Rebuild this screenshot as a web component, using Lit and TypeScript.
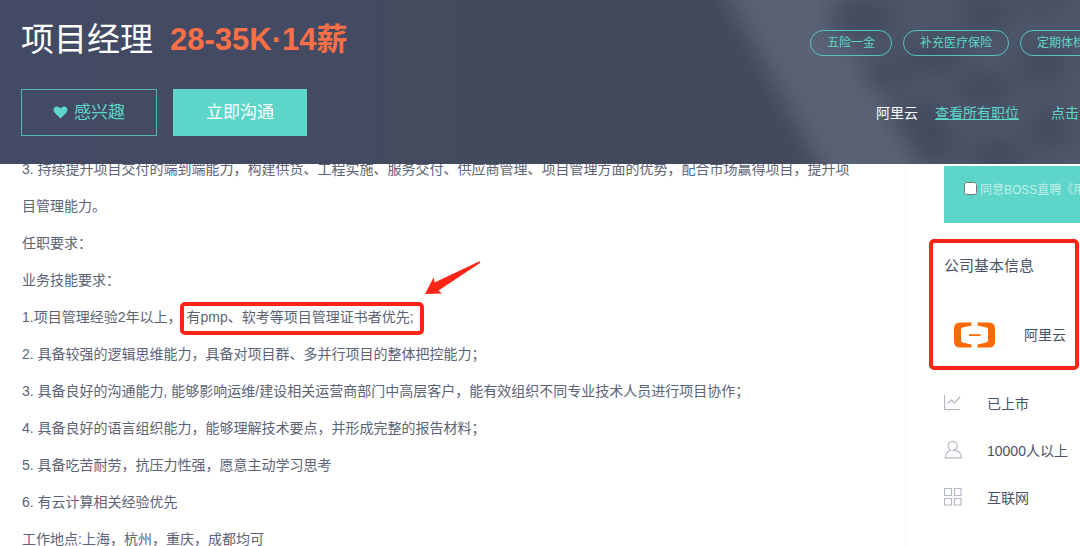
import { LitElement, html, css, svg } from "lit";
import { customElement } from "lit/decorators.js";

interface Fact { icon: unknown; text: string; }

const LINES: string[] = [
  "任职要求：",
  "业务技能要求：",
];

const MORE: string[] = [
  "2. 具备较强的逻辑思维能力，具备对项目群、多并行项目的整体把控能力；",
  "3. 具备良好的沟通能力, 能够影响运维/建设相关运营商部门中高层客户，能有效组织不同专业技术人员进行项目协作；",
  "4. 具备良好的语言组织能力，能够理解技术要点，并形成完整的报告材料；",
  "5. 具备吃苦耐劳，抗压力性强，愿意主动学习思考",
  "6. 有云计算相关经验优先",
  "工作地点:上海，杭州，重庆，成都均可",
];

const FACTS: Fact[] = [
  { icon: svg`<path d="M.5 2v14.5H16M3.500 10.500l4-3.500 3 3 5.500-6"/>`, text: "已上市" },
  { icon: svg`<path d="M7 10.200A4.600 4.600 0 1 1 12.500 8.500C11.500 9.500 10 10 9.500 10.300 14.500 10.500 17.500 13 17.500 17.800H1.300C1.300 13.500 3.500 11.500 7 10.200"/>`, text: "10000人以上" },
  { icon: svg`<path d="M.5 1.500h7v7h-7zM10.500 1.500h6.500v7h-6.500zM.5 11.500h7v6.500h-7zM10.500 11.500h6.500v6.500h-6.500z"/>`, text: "互联网" },
];

// Blurred keyboard keys behind the header: x, y, half width, half height.
const KEYS: number[][] = [
  [862, 18, 36, 17], [888, 74, 22, 15], [934, 56, 30, 18], [985, 14, 26, 18], [1042, 0, 26, 10],
  [1042, 64, 26, 18], [985, 90, 28, 18], [920, 118, 24, 18], [936, 144, 24, 18], [998, 156, 28, 18],
  [1050, 128, 24, 18],
];

@customElement("job-header")
export class JobHeader extends LitElement {
  static styles = css`
    :host { display: block; position: relative; z-index: 1; overflow: hidden; background: linear-gradient(90deg, #434a63 0, #434a62 360px, #434b5e 400px, #42495c 720px); color: #fff; }
    .backdrop { position: absolute; top: 0; left: 0; width: 1080px; height: 164px; }
    .bar { position: relative; display: flex; justify-content: space-between; padding: 15px 0 28px 21px; height: 121px; white-space: nowrap; }
    .main, .side { display: flex; flex-direction: column; justify-content: space-between; }
    .title { display: flex; align-items: center; gap: 17px; height: 50px; }
    h1 { margin: 0; font-size: 33px; line-height: 48px; font-weight: 400; }
    .salary { font-size: 31px; line-height: 48px; font-weight: 700; color: #fd6f47; }
    .actions { display: flex; gap: 16px; }
    button { box-sizing: border-box; display: flex; align-items: center; justify-content: center; gap: 6px; height: 47px; padding: 0; font: inherit; font-size: 17px; line-height: 26px; color: #5dd5c8; background: none; border: 1px solid #53b5b0; width: 136px; }
    .chat { width: 134px; color: #fff; background: #5dd5c8; border-color: #5dd5c8; }
    .heart { width: 15px; height: 13px; fill: #5dd5c8; }
    .side { width: 270px; }
    .tags { display: flex; gap: 11px; margin: 15px 0 0; padding: 0; list-style: none; }
    .tags li { flex: none; padding: 0 16px; font-size: 12px; line-height: 24px; border: 1px solid #56c4bc; border-radius: 13px; color: #5dd5c8; }
    .links { display: flex; align-items: center; font-size: 14px; line-height: 20px; margin: 0 0 13px 66px; }
    .links a { color: #5dd5c8; }
    .all { margin: 0 32px 0 17px; }
    .plain { text-decoration: none; }
  `;
  render() {
    return html`
      <svg class="backdrop" viewBox="0 0 1080 164" preserveAspectRatio="none" aria-hidden="true">
        <defs>
          <filter id="soft" x="-20%" y="-40%" width="140%" height="180%" color-interpolation-filters="sRGB"><feGaussianBlur stdDeviation="12"/></filter>
        </defs>
        <g filter="url(#soft)">
          <path d="M725 -50L850 214H1160V-50Z" fill="#4e566a"/>
          <path d="M702 -50L846 214H945L832 20L850 -50Z" fill="#5a6275"/>
          ${KEYS.map(([x, y, rx, ry]) => svg`<ellipse cx=${x} cy=${y} rx=${rx} ry=${ry} fill="#414a5d"/>`)}
        </g>
      </svg>
      <div class="bar">
        <div class="main">
          <div class="title"><h1>项目经理</h1><span class="salary">28-35K·14薪</span></div>
          <div class="actions">
            <button type="button"><svg class="heart" viewBox="0 0 16 14" aria-hidden="true"><path d="M8 13.500L2 7.500C-1 4 1 .5 4 .5 6 .5 7.500 1.500 8 3 8.500 1.500 10 .5 12 .5 15 .5 17 4 14 7.500Z"/></svg>感兴趣</button>
            <button type="button" class="chat">立即沟通</button>
          </div>
        </div>
        <div class="side">
          <ul class="tags"><li>五险一金</li><li>补充医疗保险</li><li>定期体检</li></ul>
          <div class="links"><span>阿里云</span><a class="all" href="#jobs">查看所有职位</a><a class="plain" href="#more">点击</a></div>
        </div>
      </div>
    `;
  }
}

@customElement("job-description")
export class JobDescription extends LitElement {
  static styles = css`
    :host { display: block; padding-left: 22px; font-size: 14px; line-height: 37px; color: #5c6375; }
    p { margin: 0; }
    .mark { position: relative; padding: 0 5px; }
    .frame { position: absolute; inset: -7px -5px -10px -1px; border: 4px solid #ff2416; border-radius: 5px; }
    .arrow { position: absolute; right: -63px; bottom: 24px; width: 58px; height: 40px; fill: #ff2416; }
  `;
  render() {
    return html`
      <p>3. 持续提升项目交付的端到端能力，构建供货、工程实施、服务交付、供应商管理、项目管理方面的优势，配合市场赢得项目，提升项<br>目管理能力。</p>
      ${LINES.map((t) => html`<p>${t}</p>`)}
      <p>1.项目管理经验2年以上，<span class="mark">有pmp、软考等项目管理证书者优先;<span class="frame"></span><svg class="arrow" viewBox="0 0 58 40" aria-hidden="true"><path d="M1 33L9.500 16.500L10.500 21.500L55 .5Q57 0 56 2L14.500 29.500L18 32.500Z"/></svg></span></p>
      ${MORE.map((t) => html`<p>${t}</p>`)}
    `;
  }
}

@customElement("company-panel")
export class CompanyPanel extends LitElement {
  static styles = css`
    :host { display: block; padding: 13px 0 0 38px; border-left: 1px solid #f4f5f7; color: #4a5166; white-space: nowrap; overflow: hidden; }
    .agree { display: flex; align-items: center; box-sizing: border-box; height: 59px; padding: 0 0 12px 20px; background: #5dd5c8; border-top: 2px solid #fff; color: #bff0ea; font-size: 12px; }
    .agree input { margin: 0 3px 0 0; width: 13px; height: 13px; flex: none; }
    .card { position: relative; padding: 30px 0 21px; }
    .frame { position: absolute; inset: 16px 1px 0 -15px; border: 4px solid #ff2416; border-radius: 5px; }
    h2 { margin: 0; font-size: 15px; line-height: 26px; font-weight: 400; }
    .company { display: flex; align-items: center; gap: 29px; margin-top: 43px; padding: 0 0 1px 10px; font-size: 14px; line-height: 26px; }
    .logo { width: 41px; height: 26px; fill: #ff6a00; flex: none; }
    ul { margin: 9px 0 0; padding: 0; list-style: none; }
    li { display: flex; align-items: center; gap: 24px; height: 47px; font-size: 14px; }
    .icon { width: 19px; height: 19px; fill: none; stroke: #b4b8c4; stroke-width: 1.2; flex: none; }
  `;
  render() {
    return html`
      <label class="agree"><input type="checkbox">同意BOSS直聘《用户协议》</label>
      <section class="card">
        <h2>公司基本信息</h2>
        <div class="company">
          <svg class="logo" viewBox="0 0 41 26" aria-hidden="true"><path d="M17.500 .5H6Q0 .5 0 6.500v13q0 6 6 6h11.500v-3L8.500 20.500Q7 20 7 18.500V7.500Q7 6 8.500 5.500L17.500 3.500zM23.500 .5H35q6 0 6 6v13q0 6-6 6H23.500v-3L32.500 20.500Q34 20 34 18.500V7.500Q34 6 32.500 5.500L23.500 3.500zM15 12.200h11.500v1.800H15z"/></svg>
          <span>阿里云</span>
        </div>
        <div class="frame"></div>
      </section>
      <ul>${FACTS.map((f) => html`<li><svg class="icon" viewBox="0 0 19 19" aria-hidden="true">${f.icon}</svg>${f.text}</li>`)}</ul>
    `;
  }
}

@customElement("app-root")
export class AppRoot extends LitElement {
  static styles = css`
    :host { display: block; height: 100vh; overflow: hidden; background: #fff; font-family: "Liberation Sans", "Noto Sans CJK SC", sans-serif; }
    .page { display: grid; grid-template-columns: 1fr 175px; margin-top: -13px; }
  `;
  render() {
    return html`
      <job-header></job-header>
      <main class="page"><job-description></job-description><company-panel></company-panel></main>
    `;
  }
}
